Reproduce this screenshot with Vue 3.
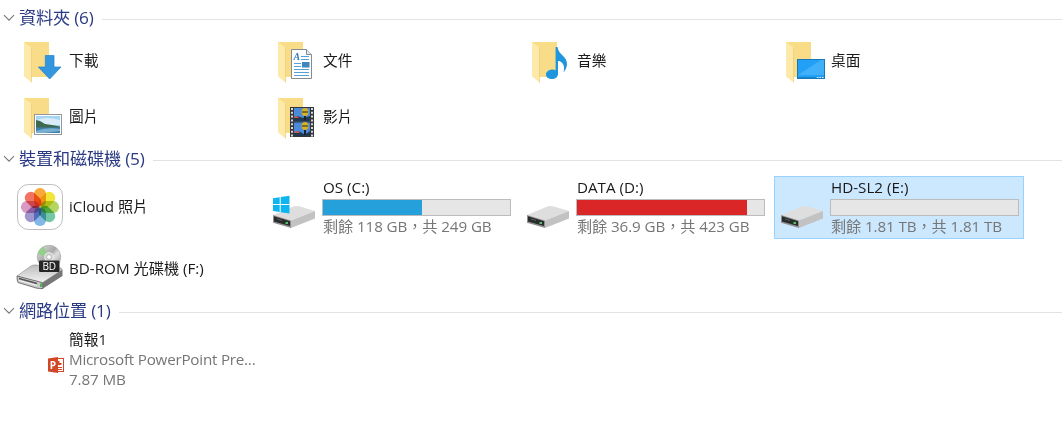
<script setup>
import { ref } from 'vue'

const folders = [
  { name: '下載', icon: 'download' },
  { name: '文件', icon: 'document' },
  { name: '音樂', icon: 'music' },
  { name: '桌面', icon: 'desktop' },
  { name: '圖片', icon: 'picture' },
  { name: '影片', icon: 'video' }
]

const devices = [
  { name: 'iCloud 照片', icon: 'photos' },
  { name: 'OS (C:)', icon: 'drive', system: true, used: 53, info: '剩餘 118 GB，共 249 GB' },
  { name: 'DATA (D:)', icon: 'drive', used: 91, full: true, info: '剩餘 36.9 GB，共 423 GB' },
  { name: 'HD-SL2 (E:)', icon: 'drive', used: 0, info: '剩餘 1.81 TB，共 1.81 TB' },
  { name: 'BD-ROM 光碟機 (F:)', icon: 'bdrom' }
]

const petals = ['#f9a83a', '#f2e53a', '#b5d560', '#74c7a5', '#82b8e6', '#a297cc', '#d99ac4', '#f37363']

const selected = ref('HD-SL2 (E:)')
</script>

<template>
  <div class="explorer" lang="zh-Hant">
    <section class="folders">
      <header>
        <svg class="chevron" viewBox="0 0 12 8"><path d="M1 1.2 6 6.2 11 1.2" /></svg>
        <h2>資料夾 (6)</h2>
        <span class="rule"></span>
      </header>
      <div class="grid">
        <div v-for="f in folders" :key="f.name" class="tile" @click="selected = f.name">
          <svg class="icon" viewBox="0 0 48 48">
            <path d="M8 5H33V40H14Z" fill="#f8dc87" />
            <path d="M8 5 15.5 10.500V45.500L8 39.500Z" fill="#fde9a9" />
            <path d="M15.500 10.500V45.500" stroke="#edcb72" stroke-width=".7" />
            <path v-if="f.icon === 'download'" d="M29.300 18.500H38V30H45L33.700 42 22.300 30H29.300Z" fill="#3397e0" stroke="#2380c8" stroke-width=".7" />
            <g v-else-if="f.icon === 'document'">
              <path d="M21.500 12.500H36.500L41.500 17.500V41.500H21.500Z" fill="#fff" stroke="#858b90" />
              <path d="M36.500 12.500V17.500H41.500" fill="#e4e8eb" stroke="#858b90" />
              <path d="M31 19.500H39M31 22.500H39M24 26.500H31M24 29.500H31M24 32.500H39M24 35.500H39M24 38.500H39" stroke="#55a3d6" />
              <rect x="32" y="25" width="7.500" height="5.500" fill="#3e86bd" />
              <text class="doc-letter" x="23.500" y="23">A</text>
            </g>
            <path v-else-if="f.icon === 'music'" d="M31.600 10H33.500C34.500 18 43 19 43 27 43 30 41.500 33 39.500 35.500 41.300 29 39 24.500 34 24V37C34 40 31 42 28 42 24.700 42 22 40.300 22 37.700 22 34.700 25 32.500 28.500 32.500 29.800 32.500 30.800 32.800 31.600 33.200Z" fill="#1e96dc" />
            <g v-else-if="f.icon === 'desktop'">
              <rect x="19.500" y="22.500" width="27" height="19" fill="#22a0f5" stroke="#1878b8" />
              <path d="M20 38 43 23H46V38Z" fill="#41b0fa" />
              <path d="M20 40.500H38" stroke="#1583d0" />
              <path d="M39 40.500H46" stroke="#d8f0ff" stroke-dasharray="1.500 1" />
            </g>
            <g v-else-if="f.icon === 'picture'">
              <rect x="18.500" y="21.500" width="27" height="20" fill="#fff" stroke="#91999e" />
              <rect x="20" y="23" width="24" height="17" fill="#a5d4f4" />
              <path d="M20 27Q30 23 44 27V32H20Z" fill="#d8edf9" />
              <path d="M20 27 24 28 29 31 36 32 44 33.500V35H20Z" fill="#3d6950" />
              <path d="M20 34.500H44V40H20Z" fill="#3e7fac" />
              <path d="M20 38Q30 34 44 36V38L28 40H20Z" fill="#76afd0" />
            </g>
            <g v-else>
              <rect x="20" y="14" width="24" height="30" fill="#343638" />
              <rect x="24" y="15" width="16" height="13.500" fill="#4a8ad8" />
              <rect x="24" y="29.500" width="16" height="13.500" fill="#4a8ad8" />
              <path d="M24 25Q27 22 30 24T40 23V28.500H24ZM24 40Q29 37 32 40T40 38V43H24Z" fill="#223850" />
              <path d="M24 25Q26 21 29 25ZM24 40Q27 36 30 40Z" fill="#d15448" />
              <ellipse cx="35" cy="19" rx="3.500" ry="4" fill="#d8af25" />
              <ellipse cx="35" cy="33" rx="3.500" ry="4" fill="#d8af25" />
              <path d="M32 19H38M32 33H38" stroke="#4d5e27" stroke-width="1.500" />
              <path d="M35 23V27M35 37V42" stroke="#172331" stroke-width="2" />
              <path d="M22 15V44M42 15V44" stroke="#e8ecef" stroke-width="1.800" stroke-dasharray="2 1.800" />
            </g>
          </svg>
          <span class="name">{{ f.name }}</span>
        </div>
      </div>
    </section>

    <section class="devices">
      <header>
        <svg class="chevron" viewBox="0 0 12 8"><path d="M1 1.2 6 6.2 11 1.2" /></svg>
        <h2>裝置和磁碟機 (5)</h2>
        <span class="rule"></span>
      </header>
      <div class="grid">
        <div
          v-for="d in devices"
          :key="d.name"
          class="tile"
          :class="{ selected: selected === d.name }"
          @click="selected = d.name"
        >
          <svg v-if="d.icon === 'photos'" class="icon" viewBox="0 0 48 48">
            <rect x="1.500" y="1.500" width="45" height="45" rx="11" fill="#fff" stroke="#bdbdbd" />
            <g class="flower">
              <rect
                v-for="(color, i) in petals"
                :key="color"
                x="18"
                y="5"
                width="12"
                height="18.500"
                rx="5.800"
                :fill="color"
                :transform="`rotate(${i * 45} 24 24)`"
              />
            </g>
          </svg>
          <svg v-else-if="d.icon === 'drive'" class="icon" viewBox="0 0 48 48">
            <path d="M3 32 24 23.300Q27 22.500 30 23.500L45 28 21 37.500Z" fill="#dedede" />
            <path d="M21 37.500 45 28V35.500L21 45Z" fill="#c2c2c2" />
            <path d="M3 32 21 37.500V45L3 39.800Z" fill="#8e8e8e" />
            <path d="M4 33.200 20 38.200V43L4 38.500Z" fill="#282c2a" />
            <path d="M7 36 12 37.500" stroke="#59605c" />
            <rect x="15.500" y="39" width="2.500" height="2" fill="#4fc46a" />
            <path v-if="d.system" d="M3 15.200 9.700 14.200V21H3ZM10.700 14 19.500 12.700V21H10.700ZM3 22H9.700V29L3 28ZM10.700 22H19.500V30.500L10.700 29.200Z" fill="#0fb5ee" />
          </svg>
          <svg v-else class="icon" viewBox="0 0 48 48">
            <defs>
              <linearGradient id="disc" x1="0" y1="0" x2="1" y2="1">
                <stop offset="0" stop-color="#e4e4e4" />
                <stop offset=".45" stop-color="#a9a9a9" />
                <stop offset=".6" stop-color="#dedede" />
                <stop offset="1" stop-color="#919191" />
              </linearGradient>
              <linearGradient id="case" x1="0" y1="0" x2="0" y2="1">
                <stop offset="0" stop-color="#bcbcbc" />
                <stop offset="1" stop-color="#f5f5f5" />
              </linearGradient>
            </defs>
            <path d="M1 31 15 21Q17 19.500 20 20L45 23Q47 24 45 26L26 38Q24 39 20 38Z" fill="url(#case)" stroke="#8b8b8b" stroke-width=".6" />
            <path d="M26 38 46.500 24.500V31L27 43.500Z" fill="#777" />
            <path d="M1 31 26 37.500 27 43.500Q24 44 20 43L2 37.500Q1 36 1 31Z" fill="#c9c9c9" stroke="#595959" stroke-width=".8" />
            <path d="M3 33.500 21 38.500" stroke="#555" stroke-width="1.500" />
            <path d="M3 35.500 21 40.500" stroke="#f7f7f7" />
            <rect x="24" y="38.500" width="1.800" height="3.500" fill="#44b73e" />
            <circle cx="33" cy="12" r="11.800" fill="url(#disc)" stroke="#979797" stroke-width=".5" />
            <path d="M33 12 21.500 9Q23 3.500 27.500 1.500Z" fill="#95cf8c" />
            <circle cx="33" cy="12" r="4.300" fill="#c7c7c7" stroke="#f4f4f4" />
            <circle cx="33" cy="12" r="1.800" fill="#fff" />
            <rect x="23" y="15.500" width="20.500" height="11.500" rx="1.200" fill="#262626" />
            <text class="bd-label" x="33.250" y="24.800">BD</text>
          </svg>
          <div v-if="d.info" class="details">
            <span class="name">{{ d.name }}</span>
            <div class="bar" :class="{ full: d.full }"><i :style="{ width: d.used + '%' }"></i></div>
            <span class="info">{{ d.info }}</span>
          </div>
          <span v-else class="name">{{ d.name }}</span>
        </div>
      </div>
    </section>

    <section class="network">
      <header>
        <svg class="chevron" viewBox="0 0 12 8"><path d="M1 1.2 6 6.2 11 1.2" /></svg>
        <h2>網路位置 (1)</h2>
        <span class="rule"></span>
      </header>
      <div class="grid">
        <div class="tile" @click="selected = '簡報1'">
          <svg class="icon" viewBox="0 0 48 48">
            <rect x="40" y="22.500" width="7.500" height="13" fill="#fff" stroke="#d24726" />
            <circle cx="43.500" cy="27" r="2.300" fill="#d24726" />
            <path d="M43.500 27V24.500H46V27Z" fill="#fff" />
            <path d="M41 31.500H46M41 33.500H46" stroke="#d24726" />
            <path d="M32 22.500 42 21V37L32 35.500Z" fill="#d24726" />
            <text class="ppt-letter" x="37" y="33">P</text>
          </svg>
          <div class="details file">
            <span class="name">簡報1</span>
            <span class="info type">Microsoft PowerPoint Pre...</span>
            <span class="info">7.87 MB</span>
          </div>
        </div>
      </div>
    </section>
  </div>
</template>

<style>
body {
  margin: 0;
  background: #fff;
}
</style>

<style scoped>
.explorer {
  height: 430px;
  padding-top: 7px;
  box-sizing: border-box;
  overflow: hidden;
  background: #fff;
  color: #1a1a1a;
  font-family: 'Open Sans', 'Noto Sans CJK TC', sans-serif;
  font-size: 15.2px;
}

header {
  display: flex;
  align-items: center;
  height: 22px;
  padding-left: 3px;
}

.chevron {
  width: 12px;
  height: 8px;
  margin-right: 4px;
  fill: none;
  stroke: #777;
  stroke-width: 1.1;
}

h2 {
  margin: 0;
  color: #2b3a84;
  font-size: 17.2px;
  font-weight: 400;
  line-height: 22px;
  white-space: nowrap;
  letter-spacing: -0.2px;
}

.rule {
  flex: 1;
  height: 1px;
  margin: 2px 0 0 8px;
  background: #e2e2e2;
}

.grid {
  display: grid;
  grid-template-columns: repeat(4, 250px);
  column-gap: 4px;
  padding-left: 12px;
}

.folders .grid {
  grid-auto-rows: 56px;
  margin-top: 4px;
  font-size: 14.7px;
}

.devices {
  margin-top: 3px;
}

.devices .grid {
  grid-auto-rows: 62px;
  margin-top: 6px;
}

.network .grid {
  grid-auto-rows: 62px;
  margin-top: 7px;
}

.tile {
  display: flex;
  align-items: center;
  gap: 5px;
  padding: 0 3px;
  border: 1px solid transparent;
  box-sizing: border-box;
  white-space: nowrap;
}

.tile.selected {
  margin-bottom: -1px;
  padding-bottom: 1px;
  background: #cce8ff;
  border-color: #99d1ff;
}

.icon {
  flex: none;
  width: 48px;
  height: 48px;
}

.flower rect {
  mix-blend-mode: multiply;
}

.doc-letter {
  font: italic bold 10px 'Liberation Serif', serif;
  fill: #2f7dbb;
}

.bd-label {
  font: 10px 'Open Sans', sans-serif;
  fill: #fff;
  text-anchor: middle;
}

.ppt-letter {
  font: bold 10px 'Open Sans', sans-serif;
  fill: #fff;
  text-anchor: middle;
}

.name {
  line-height: 20px;
}

.tile > .name,
.details.file {
  margin-bottom: 2px;
}

.details {
  display: flex;
  flex-direction: column;
}

.details:not(.file) .name {
  margin-bottom: 2px;
  line-height: 19px;
}

.file .name {
  font-size: 14.7px;
}

.bar {
  width: 189px;
  height: 17px;
  margin-left: -1px;
  border: 1px solid #bcbcbc;
  box-sizing: border-box;
  background: #e6e6e6;
}

.bar i {
  display: block;
  height: 100%;
  background: #26a0da;
}

.bar.full i {
  background: #da2626;
}

.info {
  color: #767676;
  line-height: 20px;
  letter-spacing: -0.1px;
}

.info.type {
  letter-spacing: -0.22px;
}
</style>
